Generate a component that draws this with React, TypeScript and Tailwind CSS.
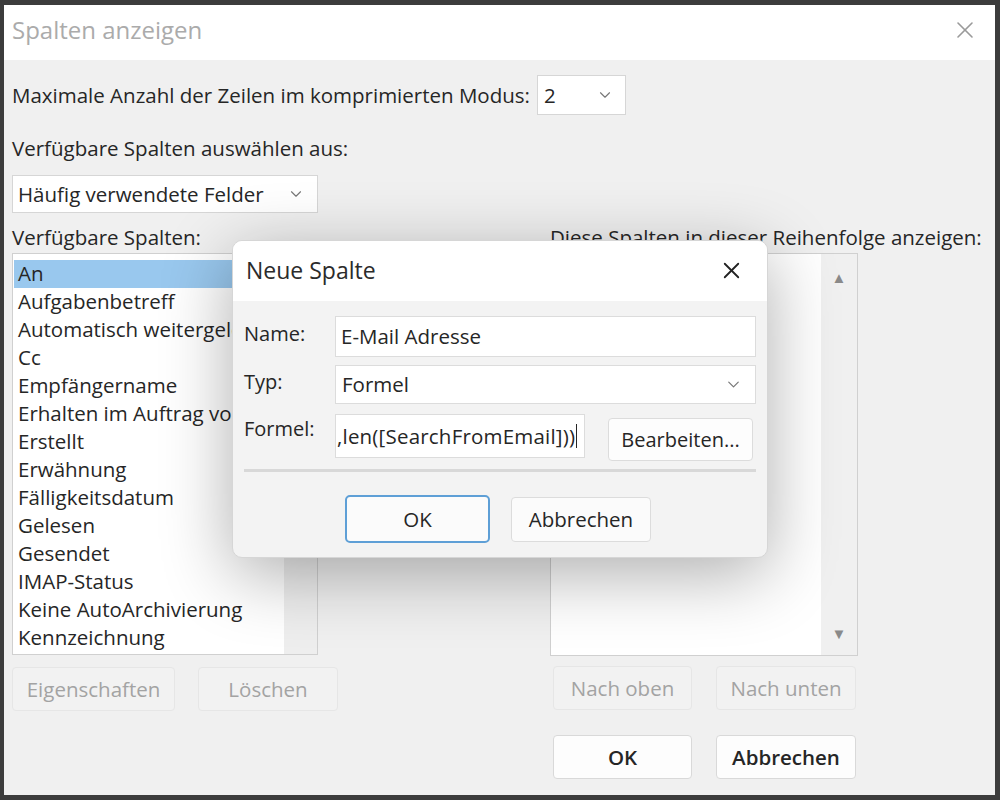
import { X, ChevronDown } from "lucide-react";

const items = [
  "An",
  "Aufgabenbetreff",
  "Automatisch weitergeleitet",
  "Cc",
  "Empfängername",
  "Erhalten im Auftrag von",
  "Erstellt",
  "Erwähnung",
  "Fälligkeitsdatum",
  "Gelesen",
  "Gesendet",
  "IMAP-Status",
  "Keine AutoArchivierung",
  "Kennzeichnung",
];

function Btn({
  children,
  disabled,
  className = "",
}: {
  children: React.ReactNode;
  disabled?: boolean;
  className?: string;
}) {
  return (
    <div
      className={
        "flex h-[44px] items-center justify-center rounded-[4px] border text-[20.5px] " +
        (disabled
          ? "border-[#e6e6e6] bg-[#f2f2f2] text-[#a3a3a3] "
          : "border-[#d9d9d9] bg-[#fdfdfd] text-[#262626] ") +
        className
      }
    >
      {children}
    </div>
  );
}

// the "Neue Spalte" dialog lies over the main window
function NeueSpalte() {
  return (
    <div className="absolute left-[232px] top-[240px] w-[536px] overflow-hidden rounded-[10px] border border-[#d6d6d6] bg-[#f3f3f3] shadow-[0_16px_70px_rgba(0,0,0,0.32)]">
      <div className="flex h-[60px] items-center justify-between bg-white pb-[2px] pl-[13px] pr-[22px]">
        <span className="text-[23px] text-[#2b2b2b]">Neue Spalte</span>
        <X className="h-[27px] w-[27px] text-[#222]" strokeWidth={1.6} />
      </div>
      <div className="px-[11px] pt-[15px] pb-[14px]">
        <div className="flex h-[41px] items-center">
          <span className="w-[91px] text-[20px] text-[#262626] -mt-[6px]">Name:</span>
          <div className="flex h-[41px] flex-1 items-center border border-[#dcdcdc] bg-white px-[5px] text-[20.5px] text-[#262626]">
            E-Mail Adresse
          </div>
        </div>
        <div className="mt-[8px] flex h-[39px] items-center">
          <span className="w-[91px] text-[20px] text-[#262626] -mt-[6px]">Typ:</span>
          <div className="flex h-[39px] flex-1 items-center justify-between border border-[#dcdcdc] bg-white pl-[6px] pr-[12px] text-[20.5px] text-[#262626]">
            Formel
            <ChevronDown className="h-[19px] w-[19px] text-[#777]" strokeWidth={1.5} />
          </div>
        </div>
        <div className="mt-[10px] flex items-start">
          <span className="w-[91px] text-[20px] text-[#262626]">Formel:</span>
          <div className="flex h-[44px] w-[250px] items-center overflow-hidden whitespace-nowrap border border-[#dcdcdc] bg-white pl-[1px] text-[20.5px] tracking-[0.2px] text-[#262626]">
            ,len([SearchFromEmail]))
            <span className="ml-[1px] h-[24px] w-[1px] bg-[#262626]" />
          </div>
          <div className="ml-[23px] mt-[4px] flex h-[43px] w-[145px] items-center justify-center rounded-[4px] border border-[#dcdcdc] bg-[#fdfdfd] text-[20px] text-[#262626]">
            Bearbeiten...
          </div>
        </div>
        <div className="mt-[8px] h-[3px] bg-[#d8d8d8]" />
        <div className="mt-[23px] flex gap-[21px] pl-[101px]">
          <div className="flex h-[48px] w-[145px] items-center justify-center rounded-[5px] border-2 border-[#5e9fd6] bg-[#fbfbfb] text-[20.5px] text-[#262626]">
            OK
          </div>
          <div className="mt-[2px] flex h-[45px] w-[140px] items-center justify-center rounded-[4px] border border-[#dcdcdc] bg-[#fbfbfb] text-[20.5px] text-[#262626]">
            Abbrechen
          </div>
        </div>
      </div>
    </div>
  );
}

export default function App() {
  return (
    <div
      className="relative h-[800px] w-[1000px] bg-[#3c3c3c] pb-[5px] pl-[4px] pr-[5px] pt-[5px]"
      style={{ fontFamily: '"Open Sans", "Noto Sans", sans-serif' }}
    >
      <div className="flex h-full flex-col bg-[#f0f0f0]">
        <div className="flex h-[55px] items-center justify-between bg-white pb-[6px] pl-[8px] pr-[16px]">
          <span className="text-[24px] text-[#ababab]">Spalten anzeigen</span>
          <X className="h-[28px] w-[28px] text-[#9a9a9a]" strokeWidth={1.4} />
        </div>
        <div className="flex flex-1 flex-col pl-[8px] text-[#262626]">
          <div className="mt-[15px] flex h-[40px] items-center">
            <span className="text-[20.5px]">
              Maximale Anzahl der Zeilen im komprimierten Modus:
            </span>
            <div className="ml-[7px] flex h-[40px] w-[89px] items-center justify-between border border-[#d6d6d6] bg-white pl-[6px] pr-[11px] text-[20.5px]">
              2
              <ChevronDown className="h-[18px] w-[18px] text-[#777]" strokeWidth={1.5} />
            </div>
          </div>
          <div className="mt-[20px] text-[20.5px] leading-[26px]">
            Verfügbare Spalten auswählen aus:
          </div>
          <div className="mt-[14px] flex h-[38px] w-[306px] items-center justify-between border border-[#d6d6d6] bg-white pl-[5px] pr-[12px] text-[20.5px]">
            Häufig verwendete Felder
            <ChevronDown className="h-[18px] w-[18px] text-[#777]" strokeWidth={1.5} />
          </div>
          <div className="mt-[11px] flex">
            <div className="flex w-[326px] flex-col">
              <div className="text-[20.5px] leading-[26px]">Verfügbare Spalten:</div>
              <div className="mt-[3px] flex h-[402px] w-[306px] border border-[#d0d0d0] bg-white">
                <div className="flex flex-1 flex-col overflow-hidden pl-[1px] pt-[6px]">
                  {items.map((t, i) => (
                    <div
                      key={t}
                      className={
                        "h-[28px] whitespace-nowrap pl-[4px] text-[20.5px] leading-[27px] " +
                        (i === 0 ? "bg-[#99c8ee]" : "")
                      }
                    >
                      {t}
                    </div>
                  ))}
                </div>
                <div className="w-[33px] bg-[#eeeeee]" />
              </div>
              <div className="mt-[12px] flex gap-[23px]">
                <Btn disabled className="w-[163px]">Eigenschaften</Btn>
                <Btn disabled className="w-[140px]">Löschen</Btn>
              </div>
            </div>
            <div className="ml-[212px] flex w-[308px] flex-col">
              <div className="whitespace-nowrap text-[20.5px] leading-[26px]">
                Diese Spalten in dieser Reihenfolge anzeigen:
              </div>
              <div className="mt-[3px] flex h-[403px] w-[308px] border border-[#d0d0d0] bg-white">
                <div className="flex-1" />
                <div className="flex w-[36px] flex-col items-center justify-between bg-[#f0f0f0] pb-[11px] pt-[12px] text-[15px] text-[#8a8a8a]">
                  <span>▲</span>
                  <span>▼</span>
                </div>
              </div>
              <div className="mt-[10px] flex gap-[24px] pl-[3px]">
                <Btn disabled className="w-[139px]">Nach oben</Btn>
                <Btn disabled className="w-[140px]">Nach unten</Btn>
              </div>
              <div className="mt-[25px] flex gap-[24px] pl-[3px]">
                <Btn className="w-[139px] font-semibold">OK</Btn>
                <Btn className="w-[140px] font-semibold">Abbrechen</Btn>
              </div>
            </div>
          </div>
        </div>
      </div>
      <NeueSpalte />
    </div>
  );
}
